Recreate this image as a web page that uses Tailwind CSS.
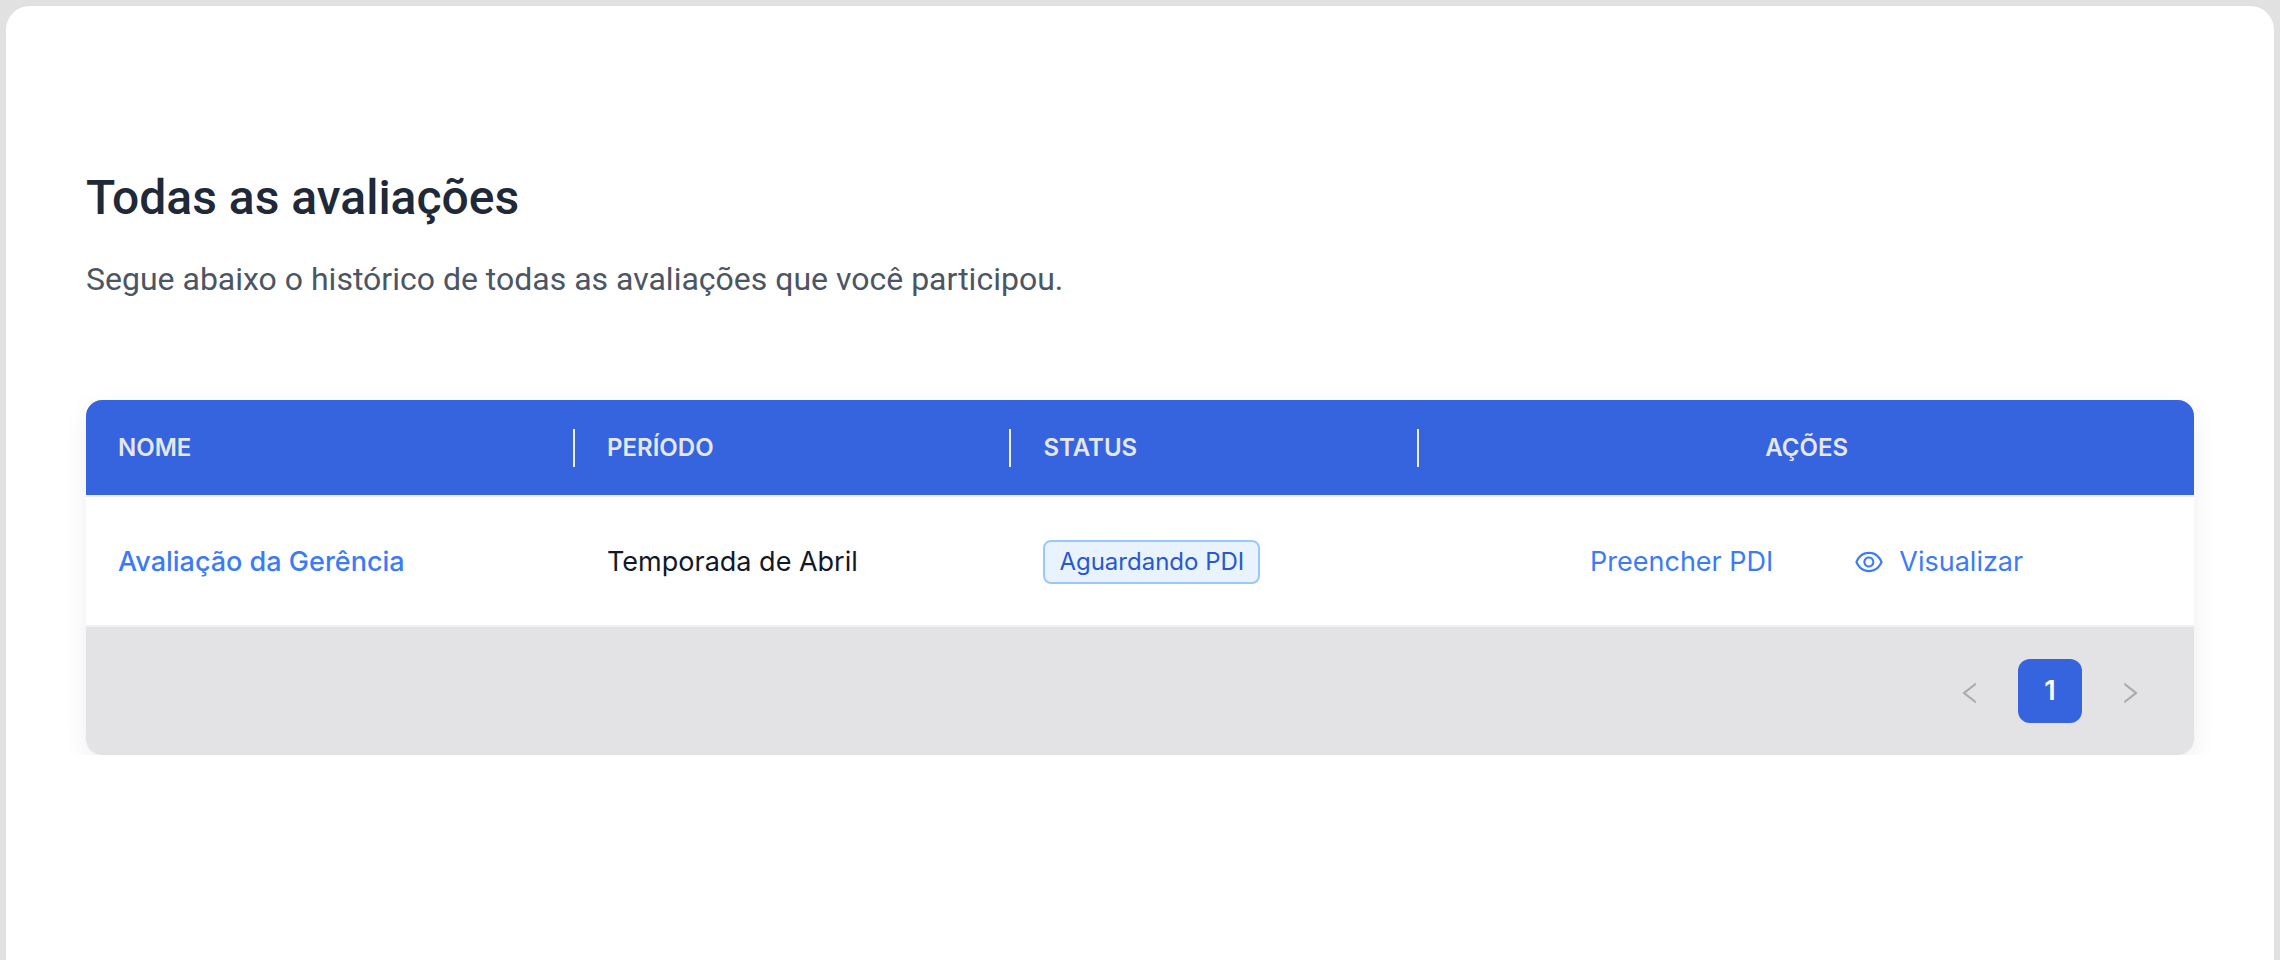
<!DOCTYPE html>
<html lang="pt-BR">
<head>
<meta charset="utf-8">
<meta name="viewport" content="width=device-width, initial-scale=1">
<title>Todas as avaliações</title>
<script src="https://cdn.jsdelivr.net/npm/@tailwindcss/browser@4"></script>
</head>
<body class="flex min-h-screen flex-col bg-[#e1e1e1] px-1.5 pt-1.5 font-['Inter',sans-serif] text-[27px] leading-10 text-[#111827]">
<main class="grow rounded-t-3xl bg-white px-20 pt-41">
  <header class="font-['Roboto',sans-serif]">
    <h1 class="text-5xl leading-[56px] font-medium text-[#1f2937]">Todas as avaliações</h1>
    <p class="mt-8 text-[32px] leading-[42px] text-[#4b5563]">Segue abaixo o histórico de todas as avaliações que você participou.</p>
  </header>

  <section class="-mx-8 mt-19 overflow-hidden px-8 pt-6" aria-label="Avaliações">
    <div class="overflow-hidden rounded-2xl bg-white shadow-[0_8px_24px_rgba(0,0,0,0.07)]">
      <table class="w-full table-fixed border-collapse text-left">
        <colgroup>
          <col class="w-[23.2%]"><col class="w-[20.7%]"><col class="w-[19.35%]"><col>
        </colgroup>
        <thead class="bg-[#3664df] text-2xl text-[#e5e7eb]">
          <tr>
            <th class="h-24 py-0 pl-8 font-semibold"><div class="flex h-[38px] items-center border-r-2 border-[#f0f0f0]">NOME</div></th>
            <th class="h-24 py-0 pl-8 font-semibold"><div class="flex h-[38px] items-center border-r-2 border-[#f0f0f0]">PERÍODO</div></th>
            <th class="h-24 py-0 pl-8 font-semibold"><div class="flex h-[38px] items-center border-r-2 border-[#f0f0f0]">STATUS</div></th>
            <th class="h-24 px-8 py-0 text-center font-semibold">AÇÕES</th>
          </tr>
        </thead>
        <tbody>
          <tr class="border-y-2 border-[#f0f0f0]">
            <td class="h-[130px] pt-0.5 pl-8 font-medium"><a href="#" class="text-[#3b7bf7]">Avaliação da Gerência</a></td>
            <td class="pt-0.5 pl-8">Temporada de Abril</td>
            <td class="pt-0.5 pl-8"><span class="flex h-11 w-fit items-center rounded-lg border-2 border-[#9bc8fb] bg-[#e8f3fe] px-3.5 text-2xl text-[#2857d2]">Aguardando PDI</span></td>
            <td class="px-8 pt-0.5">
              <div class="flex items-center justify-center gap-20 text-[#3b7bf7]">
                <a href="#">Preencher PDI</a>
                <a href="#" class="flex items-center gap-3.5">
                  <svg class="size-8" viewBox="0 0 1024 1024" fill="currentColor" aria-hidden="true"><path d="M942.2 486.2C847.4 286.5 704.1 186 512 186c-192.2 0-335.4 100.5-430.2 300.3a60.3 60.3 0 000 51.5C176.6 737.5 319.9 838 512 838c192.2 0 335.4-100.5 430.2-300.3 7.7-16.2 7.7-35 0-51.5zM512 766c-161.3 0-279.4-81.8-362.7-254C232.6 339.8 350.7 258 512 258c161.3 0 279.4 81.8 362.7 254C791.5 684.2 673.4 766 512 766zm-4-430c-97.2 0-176 78.8-176 176s78.8 176 176 176 176-78.8 176-176-78.8-176-176-176zm0 288c-61.9 0-112-50.1-112-112s50.1-112 112-112 112 50.1 112 112-50.1 112-112 112z"/></svg>
                  Visualizar
                </a>
              </div>
            </td>
          </tr>
        </tbody>
      </table>
      <nav class="flex justify-end gap-4 bg-[#e3e3e5] p-8" aria-label="Paginação">
        <button type="button" disabled aria-label="Página anterior" class="grid size-16 place-items-center pt-1 text-[#acacad]">
          <svg class="size-7" viewBox="0 0 1024 1024" fill="currentColor" aria-hidden="true"><path d="M724 218.3V141c0-6.7-7.7-10.4-12.9-6.3L260.3 486.8a31.86 31.86 0 000 50.3l450.8 352.1c5.3 4.1 12.9.4 12.9-6.3v-77.3c0-4.9-2.3-9.6-6.1-12.6l-360-281 360-281.1c3.8-3 6.1-7.7 6.1-12.6z"/></svg>
        </button>
        <button type="button" aria-current="page" class="grid size-16 place-items-center rounded-xl bg-[#3664df] font-semibold text-white">1</button>
        <button type="button" disabled aria-label="Próxima página" class="grid size-16 place-items-center pt-1 text-[#acacad]">
          <svg class="size-7" viewBox="0 0 1024 1024" fill="currentColor" aria-hidden="true"><path d="M765.7 486.8L314.9 134.7A7.97 7.97 0 00302 141v77.3c0 4.9 2.3 9.6 6.1 12.6l360 281.1-360 281.1c-3.9 3-6.1 7.7-6.1 12.6V883c0 6.7 7.7 10.4 12.9 6.3l450.8-352.1a31.96 31.96 0 000-50.4z"/></svg>
        </button>
      </nav>
    </div>
  </section>
</main>
</body>
</html>
